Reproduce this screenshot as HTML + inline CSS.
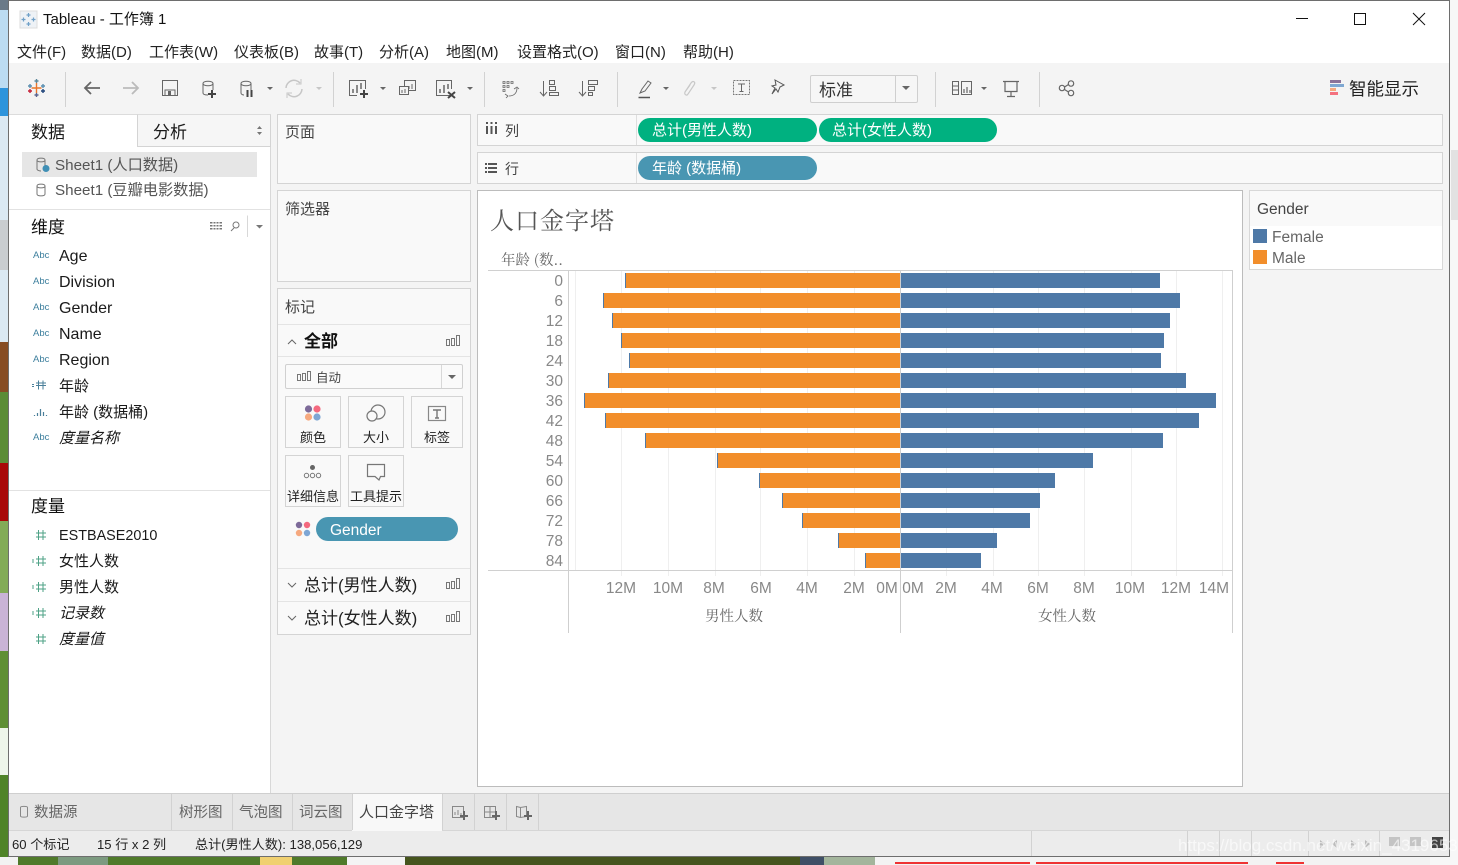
<!DOCTYPE html>
<html lang="zh"><head><meta charset="utf-8"><title>Tableau - 工作簿 1</title>
<style>
*{box-sizing:border-box}
html,body{margin:0;padding:0}
body{width:1458px;height:865px;position:relative;overflow:hidden;background:#4f7a2a;font-family:"Liberation Sans","Noto Sans CJK SC",sans-serif;color:#222}
.a{position:absolute}
.t{position:absolute;white-space:nowrap;line-height:20px;height:20px}
.card{position:absolute;background:#f9f9f9;border:1px solid #d4d4d4}
.f{font-size:16px;color:#1a1a1a;left:59px}
.i{font-style:italic}
.abc{position:absolute;left:33px;font-size:9.5px;color:#3d7f9d;line-height:12px;white-space:nowrap}
.m{font-size:15px;color:#222;top:43px}
.pill{position:absolute;border-radius:12px;color:#fff;font-size:15px;line-height:26px;height:24px;padding-left:14px;white-space:nowrap}
.btn{position:absolute;background:#f9f9f9;border:1px solid #d4d4d4;width:56px;height:52px}
.btn span{position:absolute;left:0;right:0;top:32px;text-align:center;font-size:13px;line-height:18px;color:#222;white-space:nowrap}
.ln{position:absolute;background:#d8d8d8}
.tab{position:absolute;top:803px;font-size:14.5px;color:#666;line-height:20px;white-space:nowrap}
.st{position:absolute;top:835px;font-size:13.1px;color:#222;line-height:20px;white-space:nowrap}
</style></head><body>
<!-- desktop -->
<div class="a" style="left:0;top:0;width:9px;height:88px;background:#bcdcf2"></div>
<div class="a" style="left:0;top:0;width:9px;height:10px;background:#6b7a88"></div>
<div class="a" style="left:0;top:88px;width:9px;height:28px;background:#2d94dc"></div>
<div class="a" style="left:0;top:116px;width:9px;height:226px;background:#dbe9f3"></div>
<div class="a" style="left:0;top:220px;width:9px;height:50px;background:#c9cdd0"></div>
<div class="a" style="left:0;top:342px;width:9px;height:50px;background:#874d24"></div>
<div class="a" style="left:0;top:392px;width:9px;height:71px;background:#5b8c36"></div>
<div class="a" style="left:0;top:463px;width:9px;height:58px;background:#a80808"></div>
<div class="a" style="left:0;top:521px;width:9px;height:72px;background:#83ab58"></div>
<div class="a" style="left:0;top:593px;width:9px;height:58px;background:#c9b3d6"></div>
<div class="a" style="left:0;top:651px;width:9px;height:77px;background:#5f8f35"></div>
<div class="a" style="left:0;top:728px;width:9px;height:47px;background:#eef5ea"></div>
<div class="a" style="left:0;top:775px;width:9px;height:90px;background:#4f8328"></div>
<div class="a" style="left:0;top:857px;width:18px;height:8px;background:#f2f2f2"></div>
<div class="a" style="left:58px;top:857px;width:50px;height:8px;background:#7c9a80"></div>
<div class="a" style="left:260px;top:857px;width:32px;height:8px;background:#f0d070"></div>
<div class="a" style="left:347px;top:857px;width:58px;height:8px;background:#f4f4f4"></div>
<div class="a" style="left:405px;top:857px;width:395px;height:8px;background:#46551e"></div>
<div class="a" style="left:800px;top:857px;width:24px;height:8px;background:#3f4f66"></div>
<div class="a" style="left:824px;top:857px;width:51px;height:8px;background:#a3b59c"></div>
<div class="a" style="left:875px;top:857px;width:555px;height:8px;background:#f3f3f3"></div>
<div class="a" style="left:1430px;top:857px;width:28px;height:8px;background:#f7f7f7"></div>
<div class="a" style="left:895px;top:862px;width:135px;height:2px;background:#e33"></div>
<div class="a" style="left:1036px;top:862px;width:212px;height:2px;background:#e33"></div>
<div class="a" style="left:1276px;top:862px;width:28px;height:2px;background:#e33"></div>
<div class="a" style="left:1450px;top:0;width:8px;height:865px;background:#f7f7f7"></div>
<div class="a" style="left:1451px;top:150px;width:7px;height:70px;background:#e2e2e2"></div>
<!-- window -->
<div class="a" style="left:8px;top:0;width:1442px;height:857px;background:#f4f4f4;border:1px solid #6e6e6e;border-bottom-width:1px"></div>
<div class="a" style="left:9px;top:1px;width:1440px;height:62px;background:#fff"></div>
<div class="t" style="left:43px;top:10px;font-size:15px;color:#111">Tableau - 工作簿 1</div>
<div class="t m" style="left:17px">文件(F)</div>
<div class="t m" style="left:81px">数据(D)</div>
<div class="t m" style="left:149px">工作表(W)</div>
<div class="t m" style="left:234px">仪表板(B)</div>
<div class="t m" style="left:314px">故事(T)</div>
<div class="t m" style="left:379px">分析(A)</div>
<div class="t m" style="left:446px">地图(M)</div>
<div class="t m" style="left:517px">设置格式(O)</div>
<div class="t m" style="left:615px">窗口(N)</div>
<div class="t m" style="left:683px">帮助(H)</div>
<!-- toolbar combo -->
<div class="a" style="left:810px;top:75px;width:108px;height:28px;border:1px solid #cfcfcf;border-radius:2px;background:#f6f6f6"></div>
<div class="a" style="left:895px;top:76px;width:1px;height:26px;background:#cfcfcf"></div>
<div class="t" style="left:819px;top:81px;font-size:17px;color:#333">标准</div>
<div class="t" style="left:1349px;top:79px;font-size:17.5px;color:#222">智能显示</div>
<!-- left pane -->
<div class="a" style="left:9px;top:114px;width:262px;height:680px;background:#fff;border-right:1px solid #d8d8d8"></div>
<div class="a" style="left:9px;top:114px;width:262px;height:1px;background:#dcdcdc"></div>
<div class="a" style="left:137px;top:114px;width:134px;height:33px;background:#f6f6f6;border:1px solid #d4d4d4;border-top-color:#dcdcdc"></div>
<div class="t" style="left:31px;top:123px;font-size:17px;color:#1a1a1a">数据</div>
<div class="t" style="left:153px;top:123px;font-size:17px;color:#1a1a1a">分析</div>
<div class="a" style="left:22px;top:152px;width:235px;height:25px;background:#e6e6e6"></div>
<div class="t" style="left:55px;top:156px;font-size:15.2px;color:#555">Sheet1 (人口数据)</div>
<div class="t" style="left:55px;top:181px;font-size:15.2px;color:#555">Sheet1 (豆瓣电影数据)</div>
<div class="a" style="left:9px;top:209px;width:261px;height:1px;background:#e2e2e2"></div>
<div class="t" style="left:31px;top:218px;font-size:17px;color:#111">维度</div>
<div class="abc" style="top:250px">Abc</div><div class="t f" style="top:247px">Age</div>
<div class="abc" style="top:276px">Abc</div><div class="t f" style="top:273px">Division</div>
<div class="abc" style="top:302px">Abc</div><div class="t f" style="top:299px">Gender</div>
<div class="abc" style="top:328px">Abc</div><div class="t f" style="top:325px">Name</div>
<div class="abc" style="top:354px">Abc</div><div class="t f" style="top:351px">Region</div>
<div class="t f" style="top:377px;font-size:15px">年龄</div>
<div class="t f" style="top:403px;font-size:15px">年龄 (数据桶)</div>
<div class="abc" style="top:432px">Abc</div><div class="t f i" style="top:429px;font-size:15px">度量名称</div>
<div class="a" style="left:9px;top:490px;width:261px;height:1px;background:#e2e2e2"></div>
<div class="t" style="left:31px;top:497px;font-size:17px;color:#111">度量</div>
<div class="t f" style="top:526px;font-size:14.4px">ESTBASE2010</div>
<div class="t f" style="top:552px;font-size:15px">女性人数</div>
<div class="t f" style="top:578px;font-size:15px">男性人数</div>
<div class="t f i" style="top:604px;font-size:15px">记录数</div>
<div class="t f i" style="top:630px;font-size:15px">度量值</div>
<!-- middle cards -->
<div class="card" style="left:277px;top:114px;width:194px;height:70px"></div>
<div class="t" style="left:285px;top:123px;font-size:15px;color:#444">页面</div>
<div class="card" style="left:277px;top:190px;width:194px;height:92px"></div>
<div class="t" style="left:285px;top:200px;font-size:15px;color:#444">筛选器</div>
<div class="card" style="left:277px;top:288px;width:194px;height:347px"></div>
<div class="t" style="left:285px;top:298px;font-size:15px;color:#444">标记</div>
<div class="ln" style="left:278px;top:324px;width:192px;height:1px;background:#e4e4e4"></div>
<div class="t" style="left:304px;top:332px;font-size:17px;font-weight:bold;color:#111">全部</div>
<div class="ln" style="left:278px;top:356px;width:192px;height:1px;background:#e4e4e4"></div>
<div class="a" style="left:285px;top:364px;width:178px;height:25px;border:1px solid #d0d0d0;border-radius:2px;background:#fafafa"></div>
<div class="a" style="left:441px;top:365px;width:1px;height:23px;background:#d8d8d8"></div>
<div class="t" style="left:316px;top:368px;font-size:12.5px;color:#444">自动</div>
<div class="btn" style="left:285px;top:396px"><span>颜色</span></div>
<div class="btn" style="left:348px;top:396px"><span>大小</span></div>
<div class="btn" style="left:411px;top:396px;width:52px"><span>标签</span></div>
<div class="btn" style="left:285px;top:455px"><span>详细信息</span></div>
<div class="btn" style="left:348px;top:455px"><span>工具提示</span></div>
<div class="pill" style="left:316px;top:517px;width:142px;background:#4996b2;font-size:15.5px;line-height:27px">Gender</div>
<div class="ln" style="left:278px;top:568px;width:192px;height:1px;background:#e4e4e4"></div>
<div class="t" style="left:304px;top:576px;font-size:17px;color:#222">总计(男性人数)</div>
<div class="ln" style="left:278px;top:601px;width:192px;height:1px;background:#e4e4e4"></div>
<div class="t" style="left:304px;top:609px;font-size:17px;color:#222">总计(女性人数)</div>
<!-- shelves -->
<div class="card" style="left:477px;top:114px;width:966px;height:32px"></div>
<div class="a" style="left:636px;top:115px;width:1px;height:30px;background:#dedede"></div>
<div class="t" style="left:505px;top:121px;font-size:14px;color:#444">列</div>
<div class="pill" style="left:638px;top:118px;width:179px;background:#00b180">总计(男性人数)</div>
<div class="pill" style="left:819px;top:118px;width:178px;background:#00b180;padding-left:13px">总计(女性人数)</div>
<div class="card" style="left:477px;top:152px;width:966px;height:32px"></div>
<div class="a" style="left:636px;top:153px;width:1px;height:30px;background:#dedede"></div>
<div class="t" style="left:505px;top:159px;font-size:14px;color:#444">行</div>
<div class="pill" style="left:638px;top:156px;width:179px;background:#4996b2">年龄 (数据桶)</div>
<!-- view -->
<div class="a" style="left:477px;top:190px;width:766px;height:597px;background:#fff;border:1px solid #bcbcbc"></div>
<!-- legend -->
<div class="a" style="left:1249px;top:190px;width:194px;height:80px;background:#fff;border:1px solid #d8d8d8"></div>
<div class="a" style="left:1250px;top:191px;width:192px;height:35px;background:#f9f9f9"></div>
<div class="t" style="left:1257px;top:200px;font-size:15.5px;color:#444">Gender</div>
<div class="a" style="left:1253px;top:229px;width:14px;height:14px;background:#4e79a7"></div>
<div class="a" style="left:1253px;top:250px;width:14px;height:14px;background:#f28e2b"></div>
<div class="t" style="left:1272px;top:228px;font-size:15.5px;color:#666">Female</div>
<div class="t" style="left:1272px;top:249px;font-size:15.5px;color:#666">Male</div>
<!-- bottom tabs -->
<div class="a" style="left:9px;top:793px;width:1440px;height:38px;background:#e6e6e6;border-top:1px solid #cfcfcf"></div>
<div class="a" style="left:9px;top:830px;width:1440px;height:26px;background:#ececec;border-top:1px solid #d6d6d6"></div>
<div class="a" style="left:352px;top:794px;width:90px;height:37px;background:#f8f8f8"></div>
<div class="tab" style="left:34px">数据源</div>
<div class="tab" style="left:179px">树形图</div>
<div class="tab" style="left:239px">气泡图</div>
<div class="tab" style="left:299px">词云图</div>
<div class="tab" style="left:359px;color:#444;font-size:15px">人口金字塔</div>
<div class="st" style="left:12px">60 个标记</div>
<div class="st" style="left:97px">15 行 x 2 列</div>
<div class="st" style="left:195px">总计(男性人数): 138,056,129</div>

<!-- vector layer -->
<svg class="a" style="left:0;top:0" width="1458" height="865" viewBox="0 0 1458 865" fill="none">
<!-- window buttons -->
<g stroke="#111" stroke-width="1"><path d="M1296 18.5H1308"/><rect x="1354.5" y="13.5" width="11" height="11"/><path d="M1413 13L1425 25M1425 13L1413 25"/></g>
<!-- title icon -->
<rect x="20" y="11" width="17" height="17" fill="#eef2f6" stroke="#ddd"/>
<g stroke="#6fa0c8" stroke-width="1.2"><path d="M28.5 13v4M26.5 15h4M28.5 22v4M26.5 24h4M23.5 17.500v4M21.500 19.500h4M33.500 17.500v4M31.500 19.500h4"/></g>
<!-- toolbar separators -->
<path d="M65.500 72V107M333.500 72V107M484.500 72V107M617.500 72V107M935.500 72V107M1039.500 72V107" stroke="#d2d2d2"/>
<!-- tableau logo -->
<g stroke-width="1.400"><path d="M36.500 83v10M31.500 88h10" stroke="#e8762c"/><path d="M36.500 79v4M34.500 81h4" stroke="#5b879b"/><path d="M36.500 93v4M34.500 95h4" stroke="#5b6591"/><path d="M30 84v4M28 86h4M43 84v4M41 86h4" stroke="#5b8fb0"/><path d="M30 89v4M28 91h4" stroke="#c72037"/><path d="M43 89v4M41 91h4" stroke="#1f447a"/></g>
<!-- back / forward -->
<path d="M100 88H85M91 82l-6 6 6 6" stroke="#666" stroke-width="1.800"/>
<path d="M123 88H138M132 82l6 6-6 6" stroke="#bbb" stroke-width="1.800"/>
<!-- save -->
<path d="M162.500 80.500H177.500V95.500H162.500ZM165 95V90H175V95" stroke="#666"/><rect x="168" y="91" width="3" height="4" fill="#666"/>
<!-- new ds -->
<g stroke="#666"><path d="M203 83.500c0-3 10-3 10 0V90M203 83.500V93c0 1.500 2 2 5 2M203 83.500c0 3 10 3 10 0"/></g>
<path d="M212 90v8M208 94h8" stroke="#444" stroke-width="2"/>
<g stroke="#666"><path d="M241 83.500c0-3 10-3 10 0V90M241 83.500V93c0 1.500 2 2 3 2M241 83.500c0 3 10 3 10 0"/></g>
<path d="M247.500 90v7M251.500 90v7" stroke="#444" stroke-width="2"/>
<path d="M267 87h6l-3 3z" fill="#666"/>
<path d="M286 88a8 8 0 0 1 14-5M302 89a8 8 0 0 1-14 5" stroke="#c6c6c6" stroke-width="1.500"/><path d="M301 79v5h-5M287 98v-5h5" stroke="#c6c6c6"/>
<path d="M316 87h6l-3 3z" fill="#c6c6c6"/>
<!-- add sheet -->
<path d="M357 95.500H349.500V80.500H365.500V89" stroke="#666"/><path d="M353 93v-4M357 93v-8M361 89v-6" stroke="#666" stroke-width="1.500"/><path d="M364 90v8M360 94h8" stroke="#444" stroke-width="2"/>
<path d="M380 87h6l-3 3z" fill="#666"/>
<g stroke="#666"><rect x="404.500" y="80.500" width="11" height="10"/><rect x="399.500" y="86.500" width="9" height="8" fill="#f4f4f4"/><path d="M409 89v-3M412 89v-5M402 93v-3M405 93v-4"/></g>
<path d="M450 95.500H436.500V80.500H451.500V89" stroke="#666"/><path d="M440 93v-4M444 93v-8M448 89v-5" stroke="#666" stroke-width="1.500"/><path d="M448 92l7 6M455 92l-7 6" stroke="#444" stroke-width="2"/>
<path d="M467 87h6l-3 3z" fill="#666"/>
<!-- swap -->
<g stroke="#666" stroke-width="0.800"><path d="M503 81.500h2v2h-2zM507 81.500h2v2h-2zM511 81.500h2v2h-2zM503 85.500h2v2h-2zM507 85.500h2v2h-2zM503 89.500h2v2h-2z"/><path d="M517 88c0 5-3 8-8 8M505 94l3 2-2 2M514 89l3-2 2 2"/></g>
<!-- sorts -->
<g stroke="#666"><path d="M543.500 81V96M540 92l3.500 4 3.500-4M549.500 80.500h5v4h-5zM549.500 86.500h6v4h-6zM549.500 92.500h9v3h-9z"/></g>
<g stroke="#666"><path d="M582.500 81V96M579 92l3.500 4 3.500-4M588.500 80.500h9v4h-9zM588.500 86.500h6v4h-6zM588.500 92.500h4v3h-4z"/></g>
<!-- highlighter -->
<path d="M640 93l2-4 6-8 3 2-6 8z" stroke="#666"/><path d="M638.500 97.500H650" stroke="#555" stroke-width="1.500"/>
<path d="M663 87h6l-3 3z" fill="#666"/>
<path d="M685 92l6-9c2-3 5-1 3 2l-6 9c-1 2-4 1-3-2l5-7" stroke="#c8c8c8" stroke-width="1.200"/>
<path d="M711 87h6l-3 3z" fill="#c6c6c6"/>
<rect x="733.500" y="80.500" width="16" height="14" stroke="#777" stroke-dasharray="2 1"/><path d="M738 84h7M741.500 84v8M739.500 91.500h4" stroke="#666"/>
<path d="M775 80l9 5-4 2-2 5-2-3-4 5 3-6-3-2 4-1z" stroke="#555"/>
<path d="M902 86h8l-4 4z" fill="#666"/>
<!-- view -->
<g stroke="#666"><rect x="952.500" y="81.500" width="6" height="13"/><rect x="961.500" y="81.500" width="10" height="13"/><path d="M952 86h6M952 90h6"/><path d="M964 93v-4M967 93v-6M970 93v-3" stroke-width="1.200"/></g>
<path d="M981 87h6l-3 3z" fill="#666"/>
<path d="M1003 81.500H1019M1005 82V91.500H1017V82M1011 92V96M1007 96.500H1015" stroke="#666" stroke-width="1.200"/>
<g stroke="#666" stroke-width="1.200"><circle cx="1071" cy="83.500" r="2.700"/><circle cx="1071" cy="93" r="2.700"/><circle cx="1062" cy="88" r="2.700"/><path d="M1064.500 87l4-2.500M1064.500 89.500l4 2.500"/></g>
<!-- show me -->
<rect x="1330" y="80" width="11" height="3" fill="#8c7399"/><rect x="1330" y="84" width="14" height="3" fill="#7fa8d2"/><rect x="1330" y="88" width="6" height="3" fill="#f5a97f"/><rect x="1330" y="92" width="8" height="3" fill="#f4727f"/>
<!-- shelf icons -->
<path d="M486 126h2v8h-2zM490.500 126h2v8h-2zM495 126h2v8h-2z" fill="#555"/><rect x="486" y="122" width="2" height="2" fill="#555"/><rect x="490.500" y="122" width="2" height="2" fill="#555"/><rect x="495" y="122" width="2" height="2" fill="#555"/>
<g fill="#555"><rect x="485" y="163" width="2" height="2"/><rect x="485" y="167" width="2" height="2"/><rect x="485" y="171" width="2" height="2"/><rect x="488" y="163" width="9" height="2"/><rect x="488" y="167" width="9" height="2"/><rect x="488" y="171" width="9" height="2"/></g>
<!-- tab updown -->
<path d="M257 129l2.500-3 2.500 3zM257 132l2.500 3 2.500-3z" fill="#777"/>
<!-- ds icons -->
<g stroke="#777"><path d="M37 160c0-2.500 8-2.500 8 0V166M37 160V169c0 1.500 3 2 4 2M37 160c0 2.500 8 2.500 8 0"/></g><circle cx="46" cy="168.500" r="3.500" fill="#3f8fb5"/>
<g stroke="#777"><path d="M37 186c0-2.500 8-2.500 8 0V194c0 2.500-8 2.500-8 0ZM37 186c0 2.500 8 2.500 8 0"/></g>
<!-- dim header icons -->
<g fill="#777"><rect x="210" y="222" width="12" height="1.500"/><rect x="210" y="225" width="12" height="1.500"/><rect x="210" y="228" width="12" height="1.500"/></g>
<path d="M213 221v9M216 221v9M219 221v9" stroke="#fff"/>
<circle cx="236" cy="225" r="3" stroke="#777"/><path d="M234 228l-3 3" stroke="#777"/>
<path d="M247.500 215.500V237" stroke="#d8d8d8"/><path d="M256 225h7l-3.500 3.500z" fill="#777"/>
<!-- hash icons -->
<g stroke="#4a7f9a"><path d="M32 385h2M32 387h2M36 386H46M36 383.500H46M38.500 381v9M43 381v9" transform="translate(0,-0.500)"/></g>
<path d="M34.500 416v-1M37.500 416v-3M40.500 416v-7M43.500 416v-4M46.500 416v-1" stroke="#4a7f9a" stroke-width="1.200"/>
<g stroke="#4ea286"><path d="M36 533H46M36 537H46M38.500 530v10M43 530v10"/><path d="M36 559H46M36 563H46M38.500 556v10M43 556v10M32 560h2M32 562h2"/><path d="M36 585H46M36 589H46M38.500 582v10M43 582v10M32 586h2M32 588h2"/><path d="M36 611H46M36 615H46M38.500 608v10M43 608v10M32 612h2M32 614h2"/><path d="M36 637H46M36 641H46M38.500 634v10M43 634v10"/></g>
<!-- marks -->
<path d="M288 344l4-4 4 4" stroke="#666"/>
<g stroke="#777"><rect x="446.500" y="339.500" width="3" height="6"/><rect x="451.500" y="338.500" width="3" height="7"/><rect x="456.500" y="335.500" width="3" height="10"/></g>
<g stroke="#777"><rect x="297.500" y="374.500" width="3" height="6"/><rect x="302.500" y="373.500" width="3" height="7"/><rect x="307.500" y="371.500" width="3" height="9"/></g>
<path d="M448 375h8l-4 4z" fill="#666"/>
<!-- colour button -->
<circle cx="308.500" cy="409" r="3.600" fill="#7d6a99"/><circle cx="317" cy="409" r="3.600" fill="#f4697f"/><circle cx="308.500" cy="417" r="3.600" fill="#f6a97f"/><circle cx="317" cy="417" r="3.600" fill="#7ea6d4"/>
<circle cx="378" cy="412" r="7" stroke="#777" stroke-width="1.200"/><circle cx="372" cy="416" r="5" fill="#f9f9f9" stroke="#777" stroke-width="1.200"/>
<rect x="428.500" y="406.500" width="17" height="14" stroke="#888" stroke-width="1.200"/><path d="M433 410h8M437 410v8M435 418h4" stroke="#777" stroke-width="1.400"/>
<circle cx="312.500" cy="467.500" r="2.500" fill="#666"/><circle cx="306.500" cy="475.500" r="2.200" stroke="#777"/><circle cx="312.500" cy="475.500" r="2.200" stroke="#777"/><circle cx="318.500" cy="475.500" r="2.200" stroke="#777"/>
<path d="M367.500 464.500H384.500V476.500H380.500L379 480L375 476.500H367.500Z" stroke="#777" stroke-width="1.200"/>
<circle cx="299" cy="525" r="3.200" fill="#7d6a99"/><circle cx="307" cy="525" r="3.200" fill="#f4697f"/><circle cx="299" cy="533" r="3.200" fill="#f6a97f"/><circle cx="307" cy="533" r="3.200" fill="#7ea6d4"/>
<path d="M288 583l4 4 4-4M288 616l4 4 4-4" stroke="#666"/>
<g stroke="#777"><rect x="446.500" y="582.500" width="3" height="6"/><rect x="451.500" y="581.500" width="3" height="7"/><rect x="456.500" y="578.500" width="3" height="10"/><rect x="446.500" y="615.500" width="3" height="6"/><rect x="451.500" y="614.500" width="3" height="7"/><rect x="456.500" y="611.500" width="3" height="10"/></g>
<!-- chart grid -->
<path d="M575.500 271V570M621.500 271V576M668.500 271V576M715.500 271V576M760.500 271V576M807.500 271V576M854.500 271V576M946.500 271V576M993.500 271V576M1038.500 271V576M1084.500 271V576M1131.500 271V576M1176.500 271V576M1222.500 271V576" stroke="#efefef"/>
<!-- bars blue edge + orange -->
<g fill="#4e79a7">
<rect x="625" y="273" width="1" height="15"/><rect x="603" y="293" width="1" height="15"/><rect x="612" y="313" width="1" height="15"/><rect x="621" y="333" width="1" height="15"/><rect x="629" y="353" width="1" height="15"/><rect x="608" y="373" width="1" height="15"/><rect x="584" y="393" width="1" height="15"/><rect x="605" y="413" width="1" height="15"/><rect x="645" y="433" width="1" height="15"/><rect x="717" y="453" width="1" height="15"/><rect x="759" y="473" width="1" height="15"/><rect x="782" y="493" width="1" height="15"/><rect x="802" y="513" width="1" height="15"/><rect x="838" y="533" width="1" height="15"/><rect x="865" y="553" width="1" height="15"/>
<rect x="901" y="273" width="259" height="15"/><rect x="901" y="293" width="279" height="15"/><rect x="901" y="313" width="269" height="15"/><rect x="901" y="333" width="263" height="15"/><rect x="901" y="353" width="260" height="15"/><rect x="901" y="373" width="285" height="15"/><rect x="901" y="393" width="315" height="15"/><rect x="901" y="413" width="298" height="15"/><rect x="901" y="433" width="262" height="15"/><rect x="901" y="453" width="192" height="15"/><rect x="901" y="473" width="154" height="15"/><rect x="901" y="493" width="139" height="15"/><rect x="901" y="513" width="129" height="15"/><rect x="901" y="533" width="96" height="15"/><rect x="901" y="553" width="80" height="15"/>
</g>
<g fill="#f28e2b">
<rect x="626" y="273" width="274" height="15"/><rect x="604" y="293" width="296" height="15"/><rect x="613" y="313" width="287" height="15"/><rect x="622" y="333" width="278" height="15"/><rect x="630" y="353" width="270" height="15"/><rect x="609" y="373" width="291" height="15"/><rect x="585" y="393" width="315" height="15"/><rect x="606" y="413" width="294" height="15"/><rect x="646" y="433" width="254" height="15"/><rect x="718" y="453" width="182" height="15"/><rect x="760" y="473" width="140" height="15"/><rect x="783" y="493" width="117" height="15"/><rect x="803" y="513" width="97" height="15"/><rect x="839" y="533" width="61" height="15"/><rect x="866" y="553" width="34" height="15"/>
</g>
<path d="M488 270.500H1232M488 570.500H1232" stroke="#d0d0d0"/>
<path d="M568.500 270V633M900.500 270V633M1232.500 270V633" stroke="#cfcfcf"/>
<g font-family="'Liberation Sans',sans-serif" font-size="15.500" fill="#888" text-anchor="end">
<text x="563" y="286">0</text><text x="563" y="306">6</text><text x="563" y="326">12</text><text x="563" y="346">18</text><text x="563" y="366">24</text><text x="563" y="386">30</text><text x="563" y="406">36</text><text x="563" y="426">42</text><text x="563" y="446">48</text><text x="563" y="466">54</text><text x="563" y="486">60</text><text x="563" y="506">66</text><text x="563" y="526">72</text><text x="563" y="546">78</text><text x="563" y="566">84</text>
</g>
<g font-family="'Liberation Sans',sans-serif" font-size="15.500" fill="#888" text-anchor="middle">
<text x="621" y="593">12M</text><text x="668" y="593">10M</text><text x="714" y="593">8M</text><text x="761" y="593">6M</text><text x="807" y="593">4M</text><text x="854" y="593">2M</text><text x="887" y="593">0M</text><text x="913" y="593">0M</text><text x="946" y="593">2M</text><text x="992" y="593">4M</text><text x="1038" y="593">6M</text><text x="1084" y="593">8M</text><text x="1130" y="593">10M</text><text x="1176" y="593">12M</text><text x="1214" y="593">14M</text>
</g>
<g font-family="'Noto Serif CJK SC',serif" fill="#666">
<text x="490" y="229" font-size="24" fill="#555" letter-spacing="1">人口金字塔</text>
<text x="501" y="265" font-size="14.500">年龄 (数..</text>
<text x="705" y="621" font-size="14.500">男性人数</text>
<text x="1038" y="621" font-size="14.500">女性人数</text>
</g>
<!-- bottom tabs dividers -->
<path d="M171.500 794V830M232.500 794V830M292.500 794V830M352.500 794V830M442.500 794V830M474.500 794V830M506.500 794V830M538.500 794V830M1031.500 831V856M1187.500 831V856M1219.500 831V856M1251.500 831V856M1308.500 831V856M1379.500 831V856" stroke="#d2d2d2"/>
<path d="M20.500 807.500c0-1.500 7-1.500 7 0V816c0 1.500-7 1.500-7 0Z" stroke="#888"/>
<g stroke="#888"><rect x="452.500" y="806.500" width="11" height="11"/><path d="M455 815v-3M458 815v-5M461 815v-2"/></g><path d="M464 811v9M460 816h8" stroke="#666" stroke-width="2"/>
<g stroke="#888"><path d="M484.500 806.500h11v11h-11zM490 806.500v11M484.500 812h11"/></g><path d="M496 811v9M492 816h8" stroke="#666" stroke-width="2"/>
<g stroke="#888"><path d="M516.500 806.500l4 1 6-1v10l-6 1-4-1ZM520.500 807.500v10"/></g><path d="M528 811v9M524 816h8" stroke="#666" stroke-width="2"/>
<!-- status icons -->
<g fill="#bbb"><path d="M1320 840l5 4-5 4zM1337 840l-5 4 5 4zM1351 840l5 4-5 4zM1365 840l5 4-5 4z"/></g>
<g fill="#c4c4c4"><rect x="1389" y="837" width="11" height="9"/><rect x="1410" y="837" width="11" height="9"/></g>
<rect x="1432" y="837" width="11" height="11" fill="#444"/>
</svg>
<div class="t" style="left:1178px;top:836px;font-size:17px;color:rgba(255,255,255,.62)">https://blog.csdn.net/weixin_43196531</div>
</body></html>
